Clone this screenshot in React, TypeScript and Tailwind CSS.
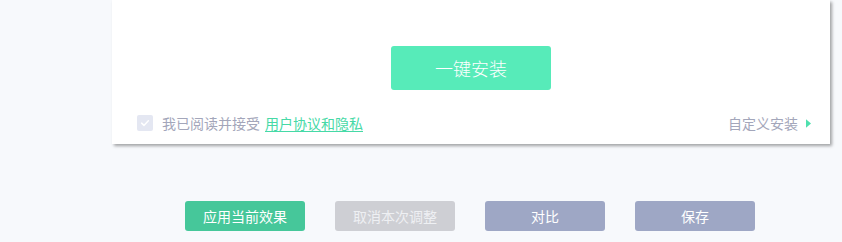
const font = { fontFamily: '"Microsoft YaHei", "Noto Sans CJK SC", sans-serif' };

const ActionButton = ({ label, className }: { label: string; className: string }) => (
	<button
		className={`w-[120px] h-[30px] rounded-[3px] text-[14px] leading-[30px] ${className}`}
	>
		{label}
	</button>
);

const App = () => {
	return (
		<div
			className="w-[842px] h-[242px] bg-[#f7f9fc] overflow-hidden"
			style={font}
		>
			<div className="ml-[112px] w-[718px]">
				<div className="h-[144px] bg-white shadow-[2px_2px_3px_rgba(0,0,0,0.35)] flex flex-col">
					<div className="pt-[46px] flex justify-center">
						<button className="w-[160px] h-[44px] rounded-[3px] bg-[#57ebb9] text-white text-[18px] leading-[44px] font-light">
							一键安装
						</button>
					</div>
					<div className="mt-[25px] pl-[25px] pr-[19px] flex items-center justify-between h-[16px]">
						<div className="flex items-center">
							<span className="size-[16px] rounded-[2px] bg-[#e4e7f2] flex items-center justify-center">
								<svg viewBox="0 0 16 16" className="size-[12px]" fill="none">
									<path
										d="M3.5 8.2 6.6 11.2 12.5 5"
										stroke="white"
										strokeWidth="2"
										strokeLinecap="round"
										strokeLinejoin="round"
									/>
								</svg>
							</span>
							<span className="ml-[9px] text-[14px] leading-[16px] text-[#a3a6ba]">
								我已阅读并接受
								<a className="ml-[5px] text-[#46d9a6] underline underline-offset-2">
									用户协议和隐私
								</a>
							</span>
						</div>
						<div className="flex items-center text-[14px] leading-[16px] text-[#a3a6ba]">
							自定义安装
							<svg viewBox="0 0 6 10" className="ml-[8px] w-[5px] h-[9px]">
								<path d="M0 0 6 5 0 10Z" fill="#4fe0ae" />
							</svg>
						</div>
					</div>
				</div>
				<div className="mt-[57px] ml-[73px] flex gap-[30px]">
					<ActionButton label="应用当前效果" className="bg-[#46c79a] text-white" />
					<ActionButton label="取消本次调整" className="bg-[#cecfd4] text-[#eef0f3]" />
					<ActionButton label="对比" className="bg-[#9ea7c5] text-white" />
					<ActionButton label="保存" className="bg-[#9ea7c5] text-white" />
				</div>
			</div>
		</div>
	);
};

export default App;
